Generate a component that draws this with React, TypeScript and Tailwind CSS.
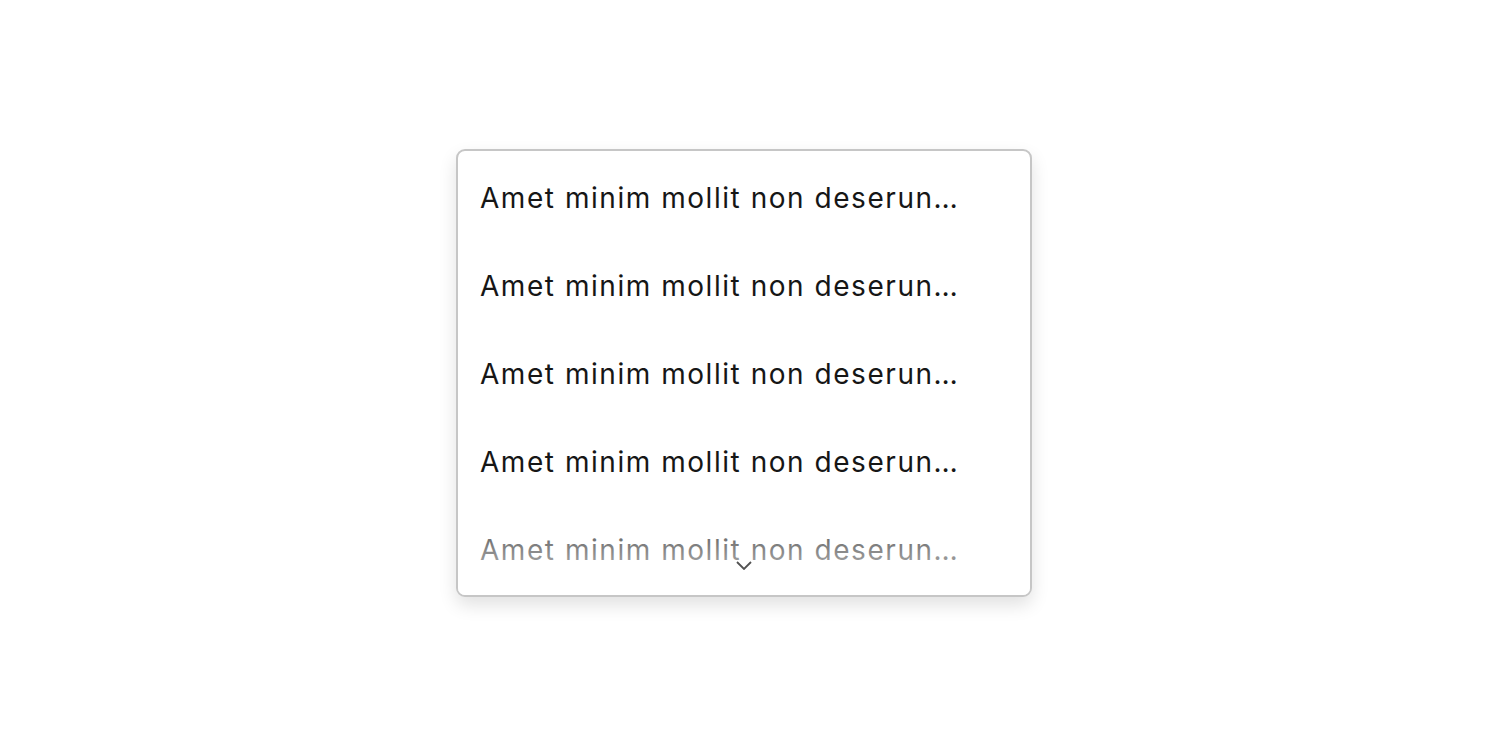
import React from "react";

const items = [
  "Amet minim mollit non deserun…",
  "Amet minim mollit non deserun…",
  "Amet minim mollit non deserun…",
  "Amet minim mollit non deserun…",
  "Amet minim mollit non deserun…",
];

export default function App() {
  return (
    <div className="flex min-h-screen w-full items-start justify-center bg-white pt-[149px] font-['Inter',sans-serif]">
      <div className="relative h-[448px] w-[576px] overflow-hidden rounded-[9px] border-2 border-[#c6c6c6] bg-white shadow-[0_8px_18px_rgba(0,0,0,0.12)]">
        <ul className="flex flex-col pt-[3px]">
          {items.map((text, i) => (
            <li
              key={i}
              className="flex h-[88px] shrink-0 items-center pl-[22px] text-[28px] tracking-[0.055em] text-[#161616]"
            >
              {text}
            </li>
          ))}
        </ul>
        {/* fade over the last row */}
        <div className="pointer-events-none absolute bottom-0 left-0 right-0 h-[68px] bg-gradient-to-b from-white/30 to-white/85" />
        <div className="absolute bottom-[25px] left-1/2 -translate-x-1/2 text-[#525252]">
          <svg width="18" height="10" viewBox="0 0 18 10" fill="none">
            <path d="M2 2l7 7 7-7" stroke="currentColor" strokeWidth="1.8" />
          </svg>
        </div>
      </div>
    </div>
  );
}
